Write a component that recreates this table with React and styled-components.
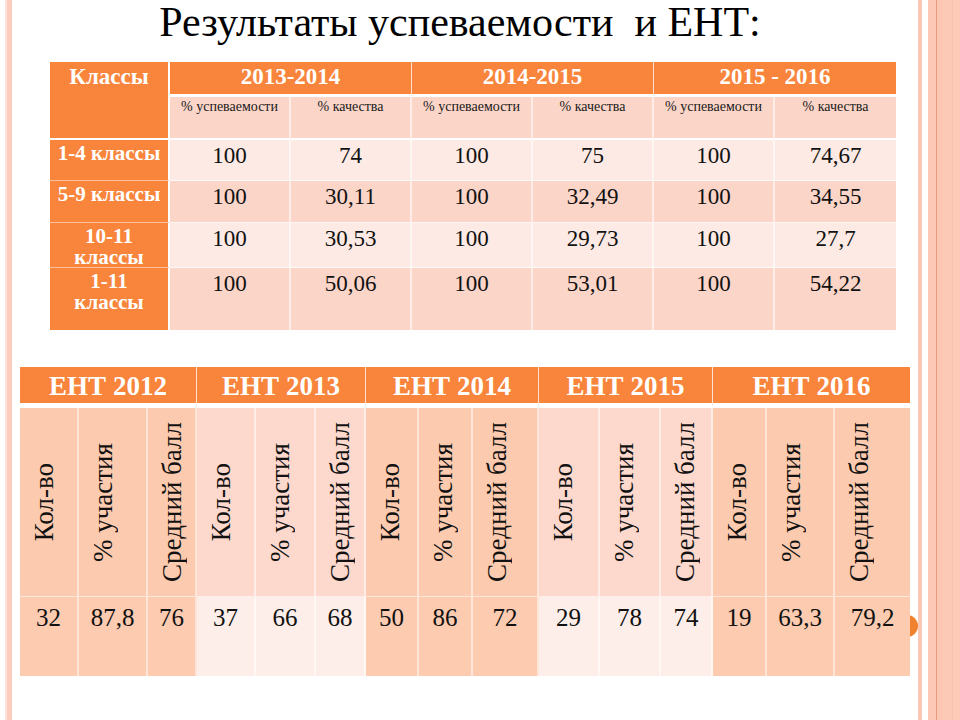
import React from "react";
import styled, { createGlobalStyle } from "styled-components";

const GlobalStyle = createGlobalStyle`
  html, body {
    margin: 0;
    padding: 0;
    background: #ffffff;
  }
  * {
    box-sizing: border-box;
  }
`;

const ORANGE = "#f8853b";

// верхняя таблица
const periods = ["2013-2014", "2014-2015", "2015 - 2016"];

const classRows = [
  { label: "1-4 классы", tone: "light", values: ["100", "74", "100", "75", "100", "74,67"] },
  { label: "5-9 классы", tone: "dark", values: ["100", "30,11", "100", "32,49", "100", "34,55"] },
  { label: "10-11\nклассы", tone: "light", values: ["100", "30,53", "100", "29,73", "100", "27,7"] },
  { label: "1-11\nклассы", tone: "dark", values: ["100", "50,06", "100", "53,01", "100", "54,22"], last: true },
];

// нижняя таблица (ЕНТ)
const entYears = [
  { title: "ЕНТ 2012", tone: "peach", values: ["32", "87,8", "76"] },
  { title: "ЕНТ 2013", tone: "pink", values: ["37", "66", "68"] },
  { title: "ЕНТ 2014", tone: "peach", values: ["50", "86", "72"] },
  { title: "ЕНТ 2015", tone: "pink", values: ["29", "78", "74"] },
  { title: "ЕНТ 2016", tone: "peach", values: ["19", "63,3", "79,2"] },
];

const entLabels = ["Кол-во", "% участия", "Средний балл"];

const headTone = { peach: "#fccaae", pink: "#fcd8cd" };
const dataTone = { peach: "#fccbb0", pink: "#fdeee9" };

const App = () => {
  return (
    <>
      <GlobalStyle />
      <Slide>
        <LeftEdge />
        <Content>
          <Title>Результаты успеваемости{"\u00a0"} и ЕНТ:</Title>

          <ClassTable>
            <CornerCell>Классы</CornerCell>
            {periods.map((p, i) => (
              <PeriodCell key={p} $last={i === periods.length - 1}>
                {p}
              </PeriodCell>
            ))}
            {periods.map((p, i) => (
              <React.Fragment key={p + "-sub"}>
                <SubCell>% успеваемости</SubCell>
                <SubCell $last={i === periods.length - 1}>% качества</SubCell>
              </React.Fragment>
            ))}
            {classRows.map((row) => (
              <React.Fragment key={row.label}>
                <LabelCell $last={row.last}>{row.label}</LabelCell>
                {row.values.map((v, i) => (
                  <ValueCell
                    key={i}
                    $tone={row.tone}
                    $last={row.last}
                    $edge={i === row.values.length - 1}
                  >
                    {v}
                  </ValueCell>
                ))}
              </React.Fragment>
            ))}
          </ClassTable>

          <EntWrap>
            <Bullet />
            <EntTable>
              {entYears.map((y, i) => (
                <GroupHead key={y.title} $last={i === entYears.length - 1}>
                  {y.title}
                </GroupHead>
              ))}
              {entYears.map((y, gi) =>
                entLabels.map((label, i) => (
                  <VerticalCell
                    key={y.title + label}
                    $tone={y.tone}
                    $edge={gi === entYears.length - 1 && i === 2}
                  >
                    <VerticalText>{label}</VerticalText>
                  </VerticalCell>
                ))
              )}
              {entYears.map((y, gi) =>
                y.values.map((v, i) => (
                  <DataCell
                    key={y.title + i}
                    $tone={y.tone}
                    $edge={gi === entYears.length - 1 && i === 2}
                  >
                    {v}
                  </DataCell>
                ))
              )}
            </EntTable>
          </EntWrap>
        </Content>
        <RightEdge />
      </Slide>
    </>
  );
};

export default App;

const Slide = styled.div`
  display: flex;
  width: 960px;
  height: 720px;
  overflow: hidden;
  background: #ffffff;
`;

const LeftEdge = styled.div`
  width: 12px;
  flex-shrink: 0;
  background: linear-gradient(
    to right,
    #ffffff 0 5px,
    #fde3da 5px 7px,
    #fbcbbc 7px 12px
  );
`;

const RightEdge = styled.div`
  width: 42px;
  flex-shrink: 0;
  background: linear-gradient(
    to right,
    #fcc8b6 0 4px,
    #ffffff 4px 10px,
    #fdc9b6 10px 18px,
    #e39d80 18px 19px,
    #fdc6b2 19px 25px,
    #fcc9b7 25px 34px,
    #f9c1ad 34px 35px,
    #fdcab8 35px 42px
  );
`;

const Content = styled.div`
  flex: 1;
  display: flex;
  flex-direction: column;
  align-items: flex-start;
  font-family: "Liberation Serif", "Times New Roman", serif;
`;

const Title = styled.h1`
  align-self: stretch;
  margin: 0;
  padding-right: 10px;
  height: 44px;
  font-weight: normal;
  font-size: 42px;
  line-height: 44px;
  color: #000000;
  text-align: center;
  white-space: nowrap;
`;

const ClassTable = styled.div`
  display: grid;
  grid-template-columns: 120px repeat(6, 121px);
  grid-template-rows: 35px 43px 41px 42px 45px 62px;
  margin: 18px 0 0 38px;
`;

const CornerCell = styled.div`
  grid-row: span 2;
  background: ${ORANGE};
  border-right: 2px solid #ffffff;
  border-bottom: 2px solid #ffffff;
  color: #ffffff;
  font-weight: bold;
  font-size: 23px;
  line-height: 30px;
  text-align: center;
`;

const PeriodCell = styled.div`
  grid-column: span 2;
  background: ${ORANGE};
  border-bottom: 3px solid #ffffff;
  border-right: ${({ $last }) => ($last ? "none" : "1px solid #fde2d2")};
  color: #ffffff;
  font-weight: bold;
  font-size: 23px;
  line-height: 30px;
  text-align: center;
`;

const SubCell = styled.div`
  background: #fcd5c9;
  border-right: ${({ $last }) =>
    $last ? "none" : "2px solid rgba(255, 255, 255, 0.55)"};
  border-bottom: 2px solid #ffffff;
  padding-top: 2px;
  color: #1a1a1a;
  font-size: 14px;
  text-align: center;
`;

const LabelCell = styled.div`
  background: ${ORANGE};
  border-right: 2px solid #ffffff;
  border-bottom: ${({ $last }) => ($last ? "none" : "1px solid #fbc09c")};
  padding: 3px 2px 0;
  color: #ffffff;
  font-weight: bold;
  font-size: 21px;
  line-height: 21px;
  text-align: center;
  white-space: pre-line;
`;

const ValueCell = styled.div`
  background: ${({ $tone }) => ($tone === "light" ? "#fdeae4" : "#fcd5c9")};
  border-right: ${({ $edge }) =>
    $edge ? "none" : "2px solid rgba(255, 255, 255, 0.55)"};
  border-bottom: ${({ $last }) =>
    $last ? "none" : "1px solid rgba(255, 255, 255, 0.8)"};
  padding-top: 3px;
  color: #111111;
  font-size: 23px;
  text-align: center;
`;

const EntWrap = styled.div`
  position: relative;
  margin: 37px 0 0 8px;
`;

const Bullet = styled.span`
  position: absolute;
  left: 876px;
  top: 248px;
  width: 22px;
  height: 22px;
  border-radius: 50%;
  background: #f0822f;
`;

const EntTable = styled.div`
  position: relative;
  display: grid;
  grid-template-columns:
    59px 69px 49px 59px 60px 50px 53px 54px 66px 61px 61px 52px 54px
    68px 75px;
  grid-template-rows: 41px 189px 79px;
`;

const GroupHead = styled.div`
  grid-column: span 3;
  display: flex;
  align-items: center;
  justify-content: center;
  background: ${ORANGE};
  border-bottom: 5px solid #ffffff;
  border-right: ${({ $last }) => ($last ? "none" : "1px solid #fde2d2")};
  padding-top: 3px;
  color: #ffffff;
  font-weight: bold;
  font-size: 27px;
`;

const VerticalCell = styled.div`
  display: flex;
  align-items: center;
  justify-content: flex-start;
  padding-left: 9px;
  background: ${({ $tone }) => headTone[$tone]};
  border-right: ${({ $edge }) =>
    $edge ? "none" : "2px solid rgba(255, 255, 255, 0.5)"};
  border-bottom: 1px solid rgba(255, 255, 255, 0.6);
`;

const VerticalText = styled.span`
  writing-mode: vertical-rl;
  transform: rotate(180deg);
  white-space: nowrap;
  color: #111111;
  font-size: 27px;
  line-height: 30px;
`;

const DataCell = styled.div`
  background: ${({ $tone }) => dataTone[$tone]};
  border-right: ${({ $edge }) =>
    $edge ? "none" : "2px solid rgba(255, 255, 255, 0.5)"};
  padding-top: 7px;
  color: #111111;
  font-size: 25px;
  text-align: center;
`;
